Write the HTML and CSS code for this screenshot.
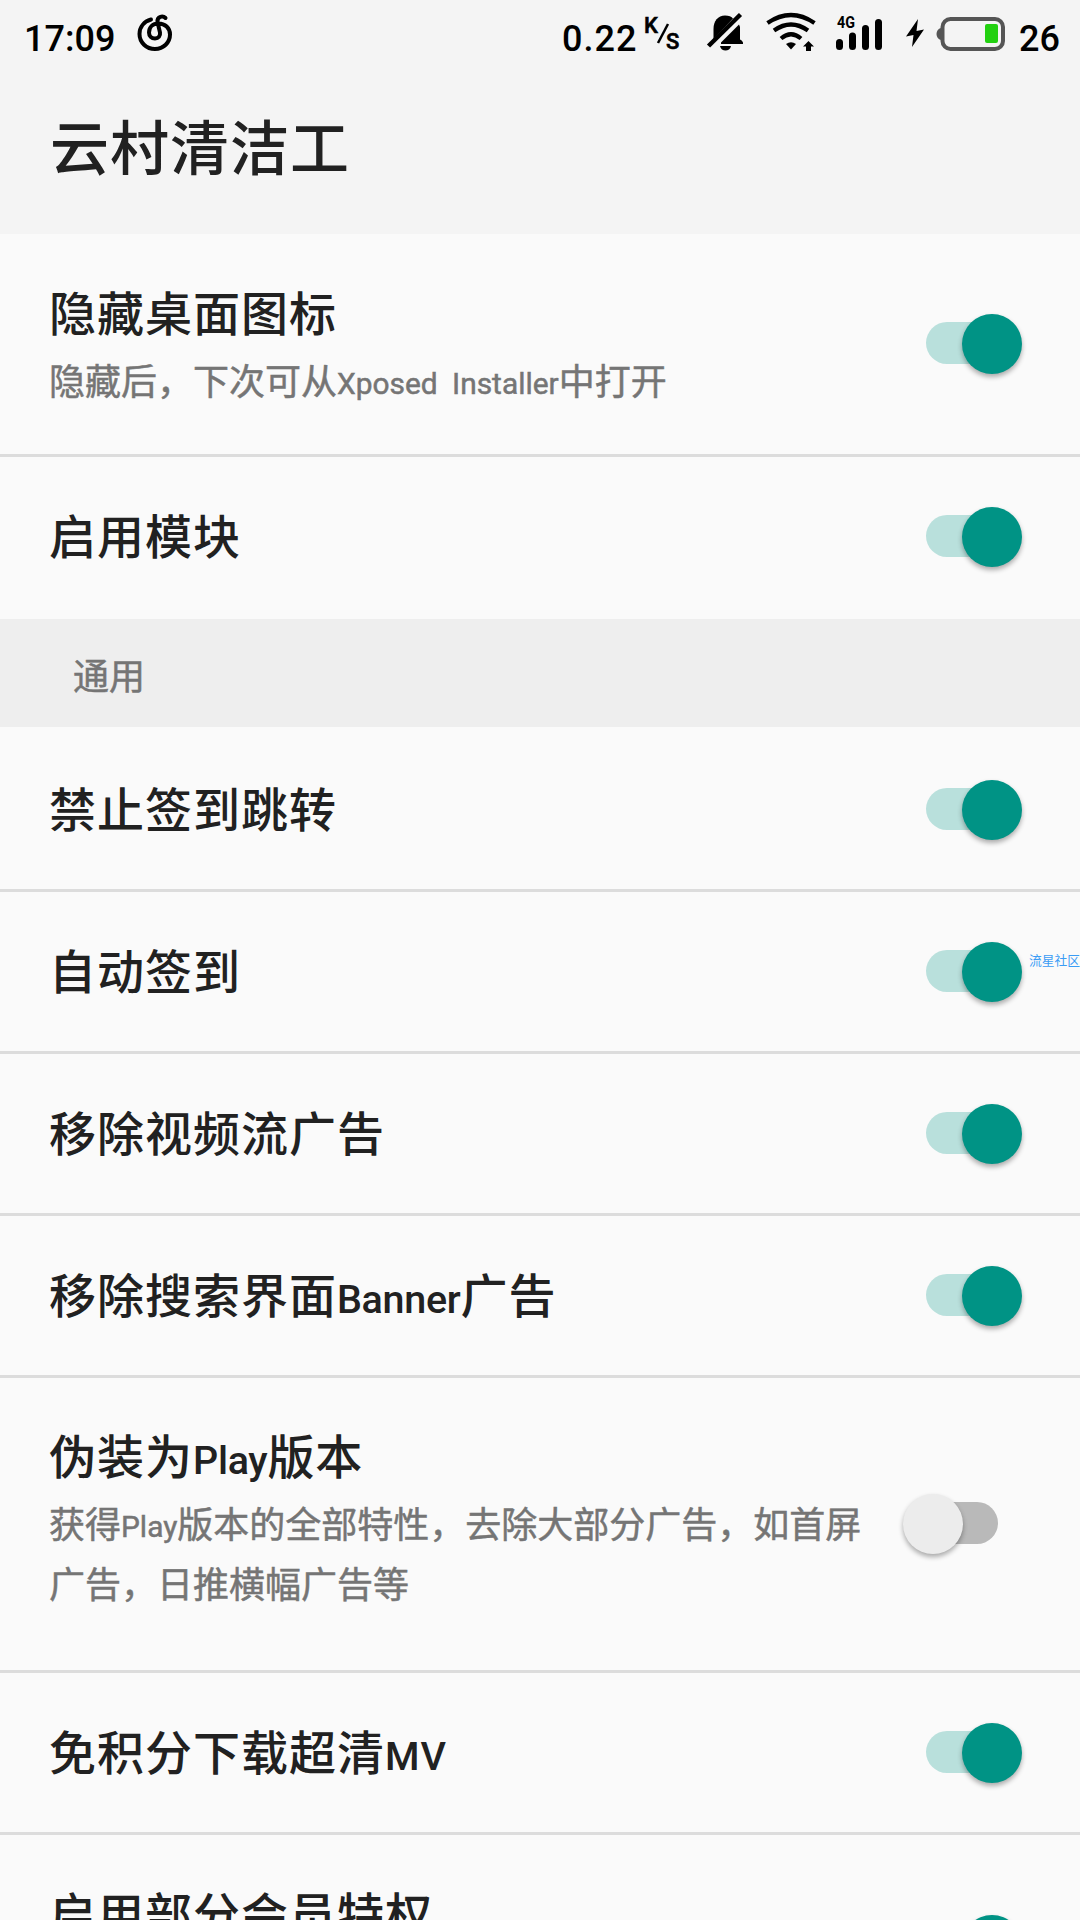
FILE: index.html
```html
<!DOCTYPE html>
<html lang="zh-CN">
<head>
    <meta charset="UTF-8">
    <meta name="viewport" content="width=device-width, initial-scale=1.0">
    <title>云村清洁工</title>
    <link rel="stylesheet" href="styles.css">
</head>
<body>
    <div class="screen">
        <!-- Header -->
        <div class="header">
            <div class="status-bar">
                <span class="clock">17:09</span>
                <svg class="music" viewBox="0 0 36 38" fill="none" stroke="#000" stroke-width="4" stroke-linecap="round">
                    <path d="M14 6.500C7 8.500 2.500 14 2.500 21C2.500 29.500 9.500 36 18 36C26.500 36 33 29.500 33 21.500C33 15 28 10.500 21.500 10.500C15.500 10.500 12 14.500 12 19.500C12 23 14.500 25.500 18 25.500C21.500 25.500 23.500 23 23 19.500L20.500 9C20 3 26 2.500 28.500 5"/>
                </svg>
                <span class="speed">0.22</span>
                <svg class="unit" viewBox="0 0 38 36">
                    <text x="0" y="17" font-size="22">K</text>
                    <path d="M14 27L24 8" stroke="#000" stroke-width="2.500"/>
                    <text x="22" y="32.500" font-size="22">S</text>
                </svg>
                <svg class="bell" viewBox="0 0 38 38">
                    <path d="M7.500 26V16C7.500 8 12 2.500 19 2.500C23 2.500 25.500 3.500 27 5.500L7.500 26Z"/>
                    <path d="M33 11.500L15 29.500V31H37C37.500 29 36 27.500 34 26.500V14Z"/>
                    <path d="M14 33H25C24 39 15 39 14 33Z"/>
                    <path d="M2.500 33L34.500 1.500" stroke="#000" stroke-width="4.500"/>
                </svg>
                <svg class="wifi" viewBox="0 0 50 38" fill="none" stroke="#000" stroke-width="4.200">
                    <path d="M1.500 10Q25-6 48.500 10"/>
                    <path d="M8 17.500Q25 5.500 42 17.500"/>
                    <path d="M15 25.500Q25 17 35 25.500"/>
                    <path d="M20 31Q25 27.500 30 31L25 36.500Z" fill="#000" stroke="none"/>
                    <path d="M42.500 28L48 33.500H45V38H40V33.500H37Z" fill="#000" stroke="none"/>
                </svg>
                <svg class="signal" viewBox="0 0 48 36" stroke="#000" stroke-width="7" stroke-linecap="round">
                    <text class="network" x="1" y="12" font-size="16.500" textLength="18" lengthAdjust="spacingAndGlyphs">4G</text>
                    <path d="M3.500 26.500V30.500M16.500 20V30.500M29.500 12.500V30.500M42.500 6.500V30.500"/>
                </svg>
                <svg class="bolt" viewBox="0 0 20 28">
                    <path d="M13 0L1 17.500L8.500 16L7 28L19 10.500L11.500 12Z"/>
                </svg>
                <svg class="battery" viewBox="0 0 70 34">
                    <path d="M5 11C-1 12-1 22 5 23Z" fill="#555"/>
                    <rect x="6.500" y="2" width="60.500" height="30" rx="8" fill="none" stroke="#555" stroke-width="4"/>
                    <rect x="49" y="7" width="13" height="19" rx="2" fill="#22d010"/>
                </svg>
                <span class="level">26</span>
            </div>
            <h1 class="title">云村清洁工</h1>
        </div>

        <!-- Module settings -->
        <div class="row tall">
            <div class="label">
                <div class="name">隐藏桌面图标</div>
                <div class="summary">隐藏后，下次可从<span class="latin">Xposed Installer</span>中打开</div>
            </div>
            <div class="switch on"></div>
        </div>
        <div class="row last">
            <div class="label"><div class="name">启用模块</div></div>
            <div class="switch on"></div>
        </div>

        <!-- General -->
        <div class="category">通用</div>
        <div class="row first">
            <div class="label"><div class="name">禁止签到跳转</div></div>
            <div class="switch on"></div>
        </div>
        <div class="row">
            <div class="label"><div class="name">自动签到</div></div>
            <div class="switch on"></div>
            <span class="watermark">流星社区</span>
        </div>
        <div class="row">
            <div class="label"><div class="name">移除视频流广告</div></div>
            <div class="switch on"></div>
        </div>
        <div class="row">
            <div class="label"><div class="name">移除搜索界面<span class="latin">Banner</span>广告</div></div>
            <div class="switch on"></div>
        </div>
        <div class="row tall two-line">
            <div class="label">
                <div class="name">伪装为<span class="latin">Play</span>版本</div>
                <div class="summary">获得<span class="latin">Play</span>版本的全部特性，去除大部分广告，如首屏广告，日推横幅广告等</div>
            </div>
            <div class="switch"></div>
        </div>
        <div class="row">
            <div class="label"><div class="name">免积分下载超清<span class="latin caps">MV</span></div></div>
            <div class="switch on"></div>
        </div>
        <div class="row tall">
            <div class="label">
                <div class="name">启用部分会员特权</div>
                <div class="summary"></div>
            </div>
            <div class="switch on"></div>
        </div>
    </div>
</body>
</html>
```
FILE: styles.css
```css
* {
    margin: 0;
    padding: 0;
    box-sizing: border-box;
}

body {
    font-family: 'Noto Sans CJK SC', sans-serif;
    width: 1080px;
    height: 1920px;
    overflow: hidden;
    background: #fafafa;
    color: #212121;
}

.screen {
    height: 1920px;
    overflow: hidden;
}

/* Header styles */
.header {
    height: 234px;
    background: #f4f4f4;
}

.status-bar {
    display: flex;
    align-items: flex-start;
    height: 72px;
    padding: 13px 20px 0 24px;
    font-family: Roboto, sans-serif;
    font-size: 36px;
    font-weight: 500;
    line-height: 52px;
    color: #000;
}

.status-bar svg {
    flex: none;
    overflow: visible;
    font-family: Roboto, sans-serif;
    font-weight: 500;
}

.clock {
    width: 113px;
}

.music {
    width: 36px;
    height: 38px;
}

.speed {
    width: 82px;
    margin-left: 389px;
    letter-spacing: 1px;
}

.unit {
    width: 38px;
    height: 36px;
    margin-top: 3px;
}

.unit text {
    stroke: #000;
    stroke-width: 0.6px;
}

.bell {
    width: 38px;
    height: 38px;
    margin-left: 24px;
}

.wifi {
    width: 50px;
    height: 38px;
    margin-left: 22px;
}

.signal {
    width: 48px;
    height: 36px;
    margin: 3px 0 0 20px;
}

.network {
    font-weight: 700;
    stroke: none;
}

.bolt {
    width: 20px;
    height: 28px;
    margin: 6px 0 0 21px;
}

.battery {
    width: 70px;
    height: 34px;
    margin: 4px 0 0 11px;
}

.level {
    margin-left: 13px;
}

.title {
    padding-left: 50px;
    font-size: 59px;
    font-weight: 500;
    line-height: 145px;
    letter-spacing: 1px;
}

/* Setting rows */
.row {
    position: relative;
    display: flex;
    align-items: center;
    justify-content: space-between;
    height: 162px;
    padding: 0 58px 0 49px;
    border-bottom: 3px solid #dcdcdc;
}

.row.last {
    border-bottom-color: transparent;
}

.row.first {
    height: 165px;
    padding-top: 3px;
}

.row.tall {
    height: 223px;
    padding-bottom: 1px;
}

.row.two-line {
    height: 295px;
}

.label {
    width: 830px;
    padding-bottom: 6px;
}

.name {
    font-size: 47px;
    font-weight: 500;
    line-height: 77px;
    letter-spacing: 1px;
}

.summary {
    min-height: 60px;
    font-size: 36px;
    line-height: 60px;
    color: #757575;
    -webkit-text-stroke: 0.5px #757575;
}

.two-line .summary {
    padding-bottom: 14px;
}

.latin {
    font-family: Roboto, sans-serif;
    font-size: 0.84em;
    line-height: 1;
    letter-spacing: -0.3px;
    word-spacing: 7px;
}

.caps {
    letter-spacing: 1px;
}

.summary .latin {
    font-size: 0.83em;
    letter-spacing: 0;
    vertical-align: 1px;
}

.category {
    height: 108px;
    padding-left: 73px;
    background: #eee;
    font-size: 36px;
    line-height: 110px;
    color: #757575;
    -webkit-text-stroke: 0.5px #757575;
}

/* Switch */
.switch {
    position: relative;
    flex: none;
    width: 120px;
    height: 61px;
}

.switch::before {
    content: "";
    position: absolute;
    left: 24px;
    top: 9px;
    width: 72px;
    height: 42px;
    border-radius: 21px;
    background: #b9b9b9;
}

.switch::after {
    content: "";
    position: absolute;
    left: 0.5px;
    top: 0.5px;
    width: 60px;
    height: 60px;
    border-radius: 50%;
    background: #ececec;
    box-shadow: 0 3px 5px rgba(0, 0, 0, 0.32);
}

.switch.on::before {
    background: #b9e0dc;
}

.switch.on::after {
    left: 59.5px;
    background: #009385;
}

.watermark {
    position: absolute;
    right: 0;
    top: 58px;
    font-size: 12.75px;
    line-height: 19px;
    color: #3a9cf5;
}
```
